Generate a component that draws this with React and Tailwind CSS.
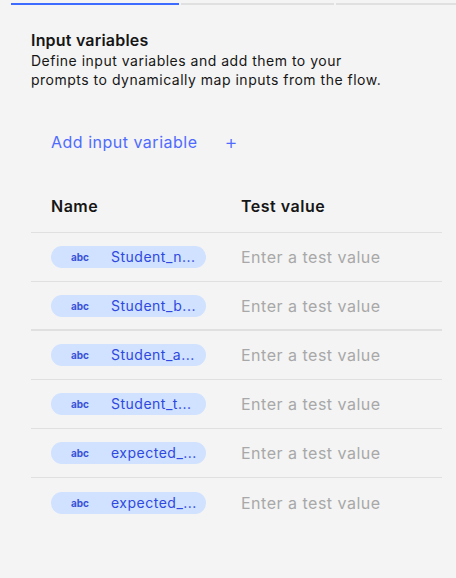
import React from "react";

const rows = [
  { name: "Student_n...", thick: false },
  { name: "Student_b...", thick: true },
  { name: "Student_a...", thick: false },
  { name: "Student_t...", thick: false },
  { name: "expected_...", thick: false },
  { name: "expected_...", thick: false, last: true },
];

export default function App() {
  return (
    <div
      className="w-[456px] h-[578px] bg-[#f4f4f4] overflow-hidden text-[#161616] tracking-[0.5px]"
      style={{ fontFamily: 'Inter, "Noto Sans", sans-serif' }}
    >
      <div className="flex pt-[3px] pl-[11px] gap-[2px]">
        <div className="w-[168px] h-[2px] bg-[#3d6bff]" />
        <div className="w-[153px] h-[2px] bg-[#e0e0e0]" />
        <div className="flex-1 h-[2px] bg-[#e0e0e0]" />
      </div>

      <div className="pl-[31px] pr-[14px]">
        <div className="mt-[24px] text-[16px] font-semibold leading-[22px] tracking-[0.2px]">Input variables</div>
        <div className="text-[14px] leading-[19px] text-[#161616]">
          Define input variables and add them to your
          <br />
          prompts to dynamically map inputs from the flow.
        </div>

        <div className="mt-[41px] pl-[20px] flex items-center h-[24px] text-[16px] text-[#4f6bff]">
          <span>Add input variable</span>
          <span className="ml-[27px] text-[20px] leading-none font-light">+</span>
        </div>

        <div className="mt-[31px] flex items-center h-[48px] pb-[6px] border-b border-[#e0e0e0] text-[16px] font-semibold">
          <div className="w-[210px] pl-[20px]">Name</div>
          <div>Test value</div>
        </div>

        {rows.map((r, i) => (
          <div
            key={i}
            className={
              "flex items-center h-[49px] " +
              (r.last ? "" : r.thick ? "border-b-2 border-[#e0e0e0]" : "border-b border-[#e0e0e0]")
            }
          >
            <div className="w-[210px] pl-[20px]">
              <div className="w-[155px] h-[22px] rounded-full bg-[#d0e2ff] flex items-center pl-[20px]">
                <span className="w-[40px] text-[10px] font-bold text-[#3a52d6] leading-none tracking-normal">abc</span>
                <span className="text-[14px] text-[#2f48e0] leading-none">{r.name}</span>
              </div>
            </div>
            <div className="text-[16px] text-[#a8a8a8]">Enter a test value</div>
          </div>
        ))}
      </div>
    </div>
  );
}
